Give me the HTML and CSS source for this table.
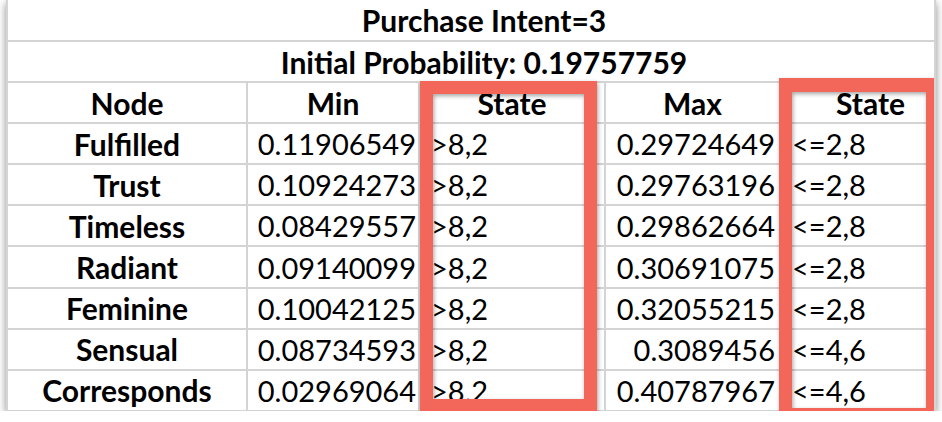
FILE: index.html
```html
<!DOCTYPE html>
<html>
<head>
<meta charset="utf-8">
<link rel="stylesheet" href="styles.css">
</head>
<body>
<div class="frame">
  <div class="grid">
    <div class="cell title">Purchase Intent=3</div>
    <div class="cell title">Initial Probability: 0.19757759</div>

    <div class="cell head">Node</div>
    <div class="cell head">Min</div>
    <div class="cell head">State</div>
    <div class="cell head">Max</div>
    <div class="cell head">State</div>

    <div class="cell node">Fulfilled</div>
    <div class="cell num">0.11906549</div>
    <div class="cell state">&gt;8,2</div>
    <div class="cell num max">0.29724649</div>
    <div class="cell state">&lt;=2,8</div>

    <div class="cell node">Trust</div>
    <div class="cell num">0.10924273</div>
    <div class="cell state">&gt;8,2</div>
    <div class="cell num max">0.29763196</div>
    <div class="cell state">&lt;=2,8</div>

    <div class="cell node">Timeless</div>
    <div class="cell num">0.08429557</div>
    <div class="cell state">&gt;8,2</div>
    <div class="cell num max">0.29862664</div>
    <div class="cell state">&lt;=2,8</div>

    <div class="cell node">Radiant</div>
    <div class="cell num">0.09140099</div>
    <div class="cell state">&gt;8,2</div>
    <div class="cell num max">0.30691075</div>
    <div class="cell state">&lt;=2,8</div>

    <div class="cell node">Feminine</div>
    <div class="cell num">0.10042125</div>
    <div class="cell state">&gt;8,2</div>
    <div class="cell num max">0.32055215</div>
    <div class="cell state">&lt;=2,8</div>

    <div class="cell node">Sensual</div>
    <div class="cell num">0.08734593</div>
    <div class="cell state">&gt;8,2</div>
    <div class="cell num max">0.3089456</div>
    <div class="cell state">&lt;=4,6</div>

    <div class="cell node">Corresponds</div>
    <div class="cell num">0.02969064</div>
    <div class="cell state">&gt;8,2</div>
    <div class="cell num max">0.40787967</div>
    <div class="cell state">&lt;=4,6</div>
  </div>
  <div class="mark mark-a"></div>
  <div class="mark mark-b"></div>
</div>
</body>
</html>
```
FILE: styles.css
```css
body {
  margin: 0;
  background: #ffffff;
  font-family: Lato, "Liberation Sans", sans-serif;
  color: #000000;
}

.frame {
  position: relative;
  margin-left: 6px;
  width: 928px;
  height: 411px;
  overflow: hidden;
  background: #ffffff;
  border-right: 2px solid #d4d4d4;
  box-shadow: 0 3px 8px rgba(0, 0, 0, 0.45);
}

.grid {
  display: grid;
  width: max-content;
  grid-template-columns: 238px 170px 184px 173px 179px;
  grid-template-rows: 40px repeat(9, 39.1px);
  gap: 2px;
  padding: 0 0 2px 2px;
  background: #d4d4d4;
}

.cell {
  display: flex;
  align-items: center;
  background: #ffffff;
  font-size: 29px;
  line-height: 1;
  white-space: nowrap;
  overflow: hidden;
}

.title {
  grid-column: 1 / -1;
  justify-content: center;
  font-weight: 700;
  font-size: 30px;
}

.head,
.node {
  justify-content: center;
  font-weight: 700;
  font-size: 30px;
}

.num {
  justify-content: flex-end;
  padding-right: 2px;
}

.num.max {
  padding-right: 4px;
}

.state {
  padding-left: 11px;
}

.mark {
  position: absolute;
  box-sizing: border-box;
  border: 13px solid #f3675a;
  filter: drop-shadow(1px 2px 2px rgba(0, 0, 0, 0.35));
}

.mark-a {
  left: 414px;
  top: 81px;
  width: 177px;
  height: 331px;
}

.mark-b {
  left: 773px;
  top: 78px;
  width: 160px;
  height: 343px;
  border-top-width: 14px;
}
```
